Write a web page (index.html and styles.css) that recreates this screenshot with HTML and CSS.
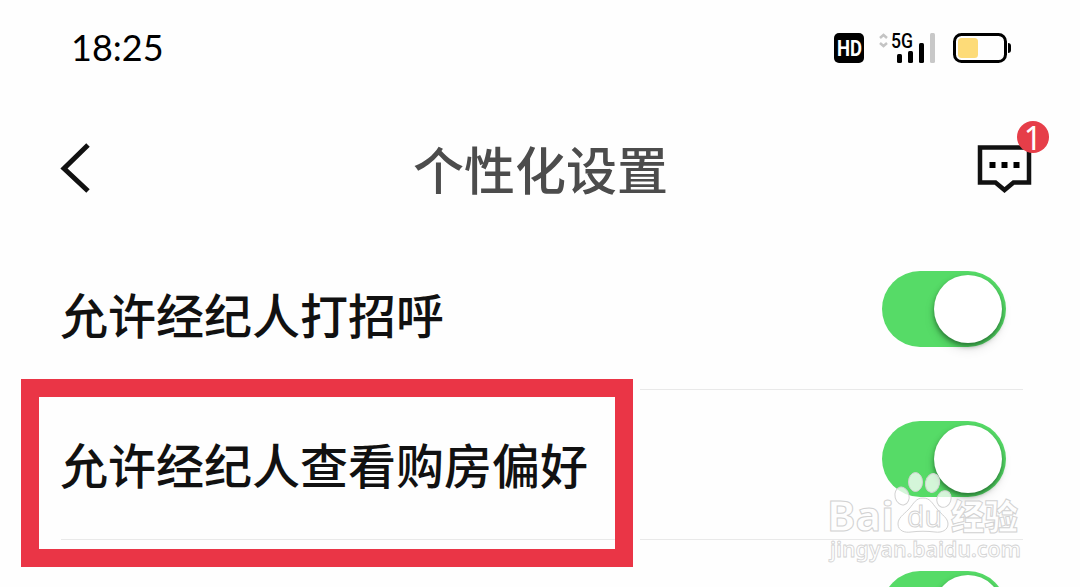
FILE: index.html
```
<!DOCTYPE html>
<html lang="zh-CN">
<head>
  <meta charset="utf-8">
  <title>个性化设置</title>
  <link rel="stylesheet" href="styles.css">
</head>
<body>
  <div class="status-bar">
    <span class="clock">18:25</span>
    <svg class="status-icons" width="180" height="36" viewBox="0 0 180 36">
      <rect x="2" y="3" width="30" height="30" rx="5"/>
      <text class="hd" x="5" y="26" textLength="25" lengthAdjust="spacingAndGlyphs">HD</text>
      <path class="arrows" d="M48 8l3.500-3 3.500 3M48 13l3.500 3 3.500-3"/>
      <text class="net" x="59" y="18" textLength="22" lengthAdjust="spacingAndGlyphs">5G</text>
      <rect x="65" y="24" width="5" height="9" rx="1.500"/>
      <rect x="76" y="21" width="5" height="12" rx="1.500"/>
      <rect x="87" y="13" width="5" height="20" rx="1.500"/>
      <rect class="bar-off" x="98" y="3" width="5" height="30" rx="1.500"/>
      <rect class="battery" x="122.500" y="4.500" width="51" height="27" rx="7"/>
      <rect class="charge" x="126" y="8" width="20" height="20" rx="3.500"/>
      <path d="M176 13a3 3 0 0 1 3 3v4a3 3 0 0 1-3 3z"/>
    </svg>
  </div>

  <div class="header">
    <svg class="back" width="36" height="56" viewBox="0 0 36 56">
      <path d="M32 5L8 28.500L32 51"/>
    </svg>
    <h1>个性化设置</h1>
    <div class="message">
      <svg width="56" height="50" viewBox="0 0 56 50">
        <path class="bubble" d="M3 4.500H52V39.500H36.500L27.500 47L18.500 39.500H3z"/>
        <path d="M12.500 19h6v6h-6zM24.500 19h6v6h-6zM36.500 19h6v6h-6z"/>
      </svg>
      <span class="badge">1</span>
    </div>
  </div>

  <div class="list">
    <div class="row">
      <span class="label">允许经纪人打招呼</span>
      <span class="toggle"></span>
    </div>
    <div class="row">
      <span class="label">允许经纪人查看购房偏好</span>
      <span class="toggle"></span>
    </div>
    <div class="row">
      <span class="label"></span>
      <span class="toggle"></span>
    </div>
  </div>

  <div class="highlight"></div>

  <svg class="watermark" width="200" height="100" viewBox="0 0 200 100">
    <text class="brand" x="1" y="61" textLength="67" lengthAdjust="spacingAndGlyphs">Bai</text>
    <g class="paw">
      <ellipse cx="76" cy="26" rx="7" ry="9" transform="rotate(-15 76 26)"/>
      <ellipse cx="89.500" cy="12" rx="7" ry="9.500"/>
      <ellipse cx="106.500" cy="13" rx="7" ry="9.500" transform="rotate(12 106.500 13)"/>
      <ellipse cx="118" cy="29" rx="7" ry="8.500" transform="rotate(20 118 29)"/>
      <path d="M97 28C90 28 88 33 83 39C77 45 72 48 72 54C72 61 79 63 85 62C93 61 101 61 109 62C116 63 122 60 122 54C122 48 116 45 111 39C106 33 104 28 97 28z"/>
    </g>
    <text class="du" x="81" y="57" textLength="35" lengthAdjust="spacingAndGlyphs">du</text>
    <text class="brand cn" x="125" y="60" textLength="67" lengthAdjust="spacingAndGlyphs">经验</text>
    <text class="url" x="4" y="87" textLength="191" lengthAdjust="spacingAndGlyphs">jingyan.baidu.com</text>
  </svg>
</body>
</html>
```

FILE: styles.css
```
body {
  margin: 0;
  height: 587px;
  overflow: hidden;
  position: relative;
  background-color: #fefefe;
  color: #111;
  font-family: "Noto Sans CJK SC", sans-serif;
}

.status-bar {
  display: flex;
  justify-content: space-between;
  align-items: center;
  height: 96px;
  padding: 0 68px 0 71px;
  box-sizing: border-box;
}

.clock {
  margin-bottom: 3px;
  font-family: Lato, sans-serif;
  font-size: 36px;
  letter-spacing: 0;
  color: #000;
}

.hd {
  font: bold 22px Roboto, sans-serif;
  fill: #fff;
}

.net {
  font: 500 20px Roboto, sans-serif;
}

.arrows {
  fill: none;
  stroke: #c4c4c4;
  stroke-width: 2.5;
}

.bar-off {
  fill: #c8c8c8;
}

.battery {
  fill: none;
  stroke: #000;
  stroke-width: 3;
}

.charge {
  fill: #fddb78;
}

.header {
  display: flex;
  justify-content: space-between;
  align-items: center;
  height: 144px;
  padding: 0 47px 0 56px;
  box-sizing: border-box;
}

.back {
  fill: none;
  stroke: #111;
  stroke-width: 5;
}

h1 {
  margin: 0 0 1px 12px;
  font-size: 51px;
  font-weight: 500;
  line-height: 70px;
  color: #4c4c4c;
}

.message {
  position: relative;
  height: 50px;
}

.bubble {
  fill: none;
  stroke: #111;
  stroke-width: 4.5;
}

.badge {
  position: absolute;
  top: -22px;
  right: -16px;
  width: 32px;
  height: 32px;
  border-radius: 50%;
  background-color: #e63e49;
  color: #fff;
  font: 32px/33px "Noto Sans", sans-serif;
  text-align: center;
}

.list {
  height: 347px;
  margin: 0 57px 0 61px;
  overflow: hidden;
}

.row {
  display: flex;
  justify-content: space-between;
  align-items: center;
  height: 150px;
  padding-right: 17px;
  border-bottom: 1px solid #e9e9e9;
  box-sizing: border-box;
}

.label {
  margin: 0 0 3px -1px;
  font-size: 48px;
  font-weight: 500;
  line-height: 70px;
}

.toggle {
  display: flex;
  justify-content: flex-end;
  width: 124px;
  height: 76px;
  margin-bottom: 11px;
  padding: 4px 4px 0 0;
  border-radius: 38px;
  background-color: #56db67;
  box-sizing: border-box;
}

.toggle::after {
  content: "";
  width: 68px;
  height: 68px;
  border-radius: 50%;
  background-color: #fff;
  box-shadow: 0 3px 5px rgba(0, 40, 10, 0.5), 0 6px 12px rgba(0, 0, 0, 0.1);
}

/* red frame around the second row */
.highlight {
  position: absolute;
  top: 379px;
  left: 21px;
  width: 612px;
  height: 188px;
  border: 18px solid #ea3546;
  box-sizing: border-box;
  box-shadow: 0 0 0 7px #fefefe;
}

.watermark {
  position: absolute;
  left: 826px;
  top: 470px;
  fill: rgba(255, 255, 255, 0.75);
  stroke: #d2d2d2;
  stroke-width: 1;
}

.brand {
  font: bold 42px "Noto Sans", sans-serif;
}

.cn {
  font: 900 35px "Noto Sans CJK SC", sans-serif;
}

.du {
  font: 29px "Noto Sans", sans-serif;
}

.url {
  font: 600 21px "Noto Sans", sans-serif;
  stroke-width: 0.8;
}
```
